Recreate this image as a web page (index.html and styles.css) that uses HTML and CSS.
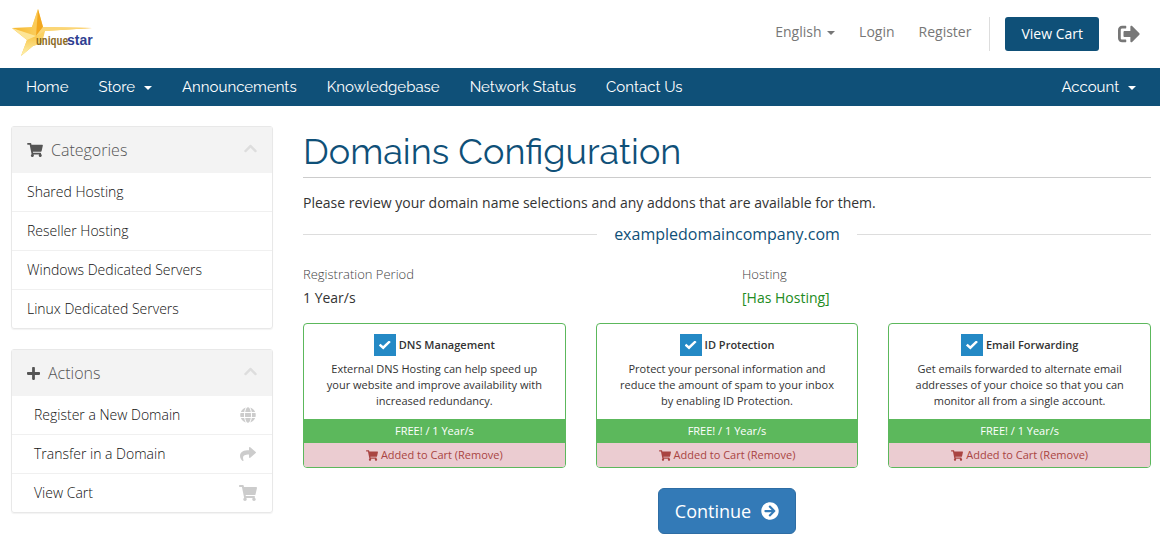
FILE: index.html
```html
<!DOCTYPE html>
<html lang="en">
<head>
<meta charset="utf-8">
<meta name="viewport" content="width=device-width, initial-scale=1">
<title>Domains Configuration</title>
<link rel="stylesheet" href="styles.css">
</head>
<body>
<svg class="sprite" aria-hidden="true">
  <symbol id="cart" viewBox="0 0 576 512"><path d="M528.12 301.319l47.273-208C578.806 78.301 567.391 64 551.99 64H159.208l-9.166-44.81C147.758 8.021 137.93 0 126.529 0H24C10.745 0 0 10.745 0 24v16c0 13.255 10.745 24 24 24h69.883l70.248 343.435C147.325 417.1 136 435.222 136 456c0 30.928 25.072 56 56 56s56-25.072 56-56c0-15.674-6.447-29.835-16.824-40h209.647C430.447 426.165 424 440.326 424 456c0 30.928 25.072 56 56 56s56-25.072 56-56c0-22.172-12.888-41.332-31.579-50.405l5.517-24.276c3.413-15.018-8.002-29.319-23.403-29.319H218.117l-6.545-32h293.145c11.206 0 20.92-7.754 23.403-18.681z"/></symbol>
  <symbol id="plus" viewBox="0 0 448 512"><path d="M416 208H272V64c0-17.67-14.33-32-32-32h-32c-17.67 0-32 14.33-32 32v144H32c-17.67 0-32 14.33-32 32v32c0 17.67 14.33 32 32 32h144v144c0 17.67 14.33 32 32 32h32c17.67 0 32-14.33 32-32V304h144c17.67 0 32-14.33 32-32v-32c0-17.67-14.33-32-32-32z"/></symbol>
  <symbol id="chevron" viewBox="0 0 448 512"><path d="M240.971 130.524l194.343 194.343c9.373 9.373 9.373 24.569 0 33.941l-22.667 22.667c-9.357 9.357-24.522 9.375-33.901.04L224 227.495 69.255 381.516c-9.379 9.335-24.544 9.317-33.901-.04l-22.667-22.667c-9.373-9.373-9.373-24.569 0-33.941L207.03 130.525c9.372-9.373 24.568-9.373 33.941-.001z"/></symbol>
  <symbol id="globe" viewBox="0 0 496 512"><path d="M336.5 160C322 70.7 287.8 8 248 8s-74 62.7-88.5 152h177zM152 256c0 22.2 1.2 43.5 3.3 64h185.3c2.1-20.5 3.3-41.8 3.3-64s-1.2-43.5-3.3-64H155.3c-2.1 20.5-3.3 41.8-3.3 64zm324.7-96c-28.6-67.9-86.5-120.4-158-141.6 24.4 33.8 41.2 84.7 50 141.6h108zM177.2 18.4C105.8 39.6 47.8 92.1 19.3 160h108c8.7-56.9 25.5-107.8 49.9-141.6zM487.4 192H372.7c2.1 21 3.3 42.5 3.3 64s-1.2 43-3.3 64h114.6c5.5-20.5 8.6-41.8 8.6-64s-3.1-43.5-8.5-64zM120 256c0-21.5 1.2-43 3.3-64H8.6C3.2 212.5 0 233.8 0 256s3.2 43.5 8.6 64h114.6c-2-21-3.2-42.5-3.2-64zm39.5 96c14.5 89.3 48.7 152 88.5 152s74-62.7 88.5-152h-177zm159.3 141.6c71.4-21.2 129.4-73.7 158-141.6h-108c-8.8 56.9-25.6 107.8-50 141.6zM19.3 352c28.6 67.9 86.5 120.4 158 141.6-24.4-33.8-41.2-84.7-50-141.6h-108z"/></symbol>
  <symbol id="share" viewBox="0 0 512 512"><path d="M503.691 189.836L327.687 37.851C312.281 24.546 288 35.347 288 56.015v80.053C127.371 137.907 0 170.1 0 322.326c0 61.441 39.581 122.309 83.333 154.132 13.653 9.931 33.111-2.533 28.077-18.631C66.066 312.814 132.917 274.316 288 272.085V360c0 20.7 24.3 31.453 39.687 18.164l176.004-152c11.071-9.562 11.086-26.753 0-36.328z"/></symbol>
  <symbol id="signout" viewBox="0 0 512 512"><path d="M497 273L329 441c-15 15-41 4.5-41-17v-96H152c-13.3 0-24-10.7-24-24v-96c0-13.3 10.7-24 24-24h136V88c0-21.4 25.9-32 41-17l168 168c9.3 9.4 9.3 24.6 0 34zM192 436v-40c0-6.6-5.4-12-12-12H96c-17.7 0-32-14.3-32-32V160c0-17.7 14.3-32 32-32h84c6.6 0 12-5.4 12-12V76c0-6.6-5.4-12-12-12H96c-53 0-96 43-96 96v192c0 53 43 96 96 96h84c6.6 0 12-5.4 12-12z"/></symbol>
  <symbol id="arrow" viewBox="0 0 512 512"><path d="M256 8c137 0 248 111 248 248S393 504 256 504 8 393 8 256 119 8 256 8zm-28.9 143.6l75.5 72.4H120c-13.3 0-24 10.7-24 24v16c0 13.3 10.7 24 24 24h182.6l-75.5 72.4c-9.7 9.3-9.9 24.8-.4 34.3l11 10.9c9.4 9.4 24.6 9.4 33.9 0L404.3 273c9.4-9.4 9.4-24.6 0-33.9L271.6 106.3c-9.4-9.4-24.6-9.4-33.9 0l-11 10.9c-9.5 9.6-9.3 25.1.4 34.4z"/></symbol>
</svg>

<header class="header">
  <a class="logo" href="#" aria-label="uniquestar">
    <svg width="84" height="52" viewBox="0 0 84 52">
      <defs>
        <linearGradient id="gold" x1="0" y1="0" x2="1" y2="0"><stop offset="0" stop-color="#f5b52c"/><stop offset="0.35" stop-color="#fbd264"/><stop offset="1" stop-color="#f8b430"/></linearGradient>
        <linearGradient id="pale" x1="0" y1="0" x2="0" y2="1"><stop offset="0" stop-color="#f9c64a"/><stop offset="1" stop-color="#fdf3b4"/></linearGradient>
      </defs>
      <path fill="url(#gold)" d="M27 1 32 19 81 20 34 23 31 35 22 38 10 48 16 32 1 20 21 19Z"/>
      <path fill="url(#pale)" d="M25 28 16 32 10 48 22 38 31 35Z"/>
      <path fill="#fbcb58" d="M27 1 21 19 25 28Z"/>
      <path fill="#f2a71f" d="M27 1 32 19 25 28Z"/>
      <path fill="#fde596" d="M1 20 25 28 16 32Z"/>
      <path fill="#fbd675" d="M32 19 81 20 34 23 25 28Z"/>
      <text class="logo-unique" x="25" y="37">unique</text>
      <text class="logo-star" x="56" y="37">star</text>
    </svg>
  </a>
  <div class="top-nav">
    <a href="#">English <span class="caret"></span></a>
    <a href="#">Login</a>
    <a href="#">Register</a>
    <div class="top-actions">
      <a class="cart-button" href="#">View Cart</a>
      <a class="signout" href="#" aria-label="Return"><svg class="icon-lg"><use href="#signout"/></svg></a>
    </div>
  </div>
</header>

<nav class="main-nav">
  <a href="#">Home</a>
  <a href="#">Store <span class="caret"></span></a>
  <a href="#">Announcements</a>
  <a href="#">Knowledgebase</a>
  <a href="#">Network Status</a>
  <a href="#">Contact Us</a>
  <a class="account" href="#">Account <span class="caret"></span></a>
</nav>

<div class="page">
  <aside class="sidebar">
    <section class="panel">
      <h2 class="panel-title"><svg class="icon"><use href="#cart"/></svg>Categories<svg class="chevron"><use href="#chevron"/></svg></h2>
      <a class="item" href="#">Shared Hosting</a>
      <a class="item" href="#">Reseller Hosting</a>
      <a class="item" href="#">Windows Dedicated Servers</a>
      <a class="item" href="#">Linux Dedicated Servers</a>
    </section>
    <section class="panel">
      <h2 class="panel-title"><svg class="icon icon-plus"><use href="#plus"/></svg>Actions<svg class="chevron"><use href="#chevron"/></svg></h2>
      <a class="item action" href="#">Register a New Domain<svg class="icon-action"><use href="#globe"/></svg></a>
      <a class="item action" href="#">Transfer in a Domain<svg class="icon-action"><use href="#share"/></svg></a>
      <a class="item action" href="#">View Cart<svg class="icon-action"><use href="#cart"/></svg></a>
    </section>
  </aside>

  <main>
    <h1>Domains Configuration</h1>
    <p class="intro">Please review your domain name selections and any addons that are available for them.</p>
    <h2 class="domain">exampledomaincompany.com</h2>
    <dl class="details">
      <div><dt>Registration Period</dt><dd>1 Year/s</dd></div>
      <div><dt>Hosting</dt><dd class="has-hosting">[Has Hosting]</dd></div>
    </dl>
    <form>
      <div class="addons">
        <section class="addon">
          <div class="addon-body">
            <label class="addon-name"><input type="checkbox" checked>DNS Management</label>
            <p>External DNS Hosting can help speed up your website and improve availability with increased redundancy.</p>
          </div>
          <div class="price">FREE! / 1 Year/s</div>
          <button class="remove" type="button"><svg class="icon-sm"><use href="#cart"/></svg>Added to Cart (Remove)</button>
        </section>
        <section class="addon">
          <div class="addon-body">
            <label class="addon-name"><input type="checkbox" checked>ID Protection</label>
            <p>Protect your personal information and reduce the amount of spam to your inbox by enabling ID Protection.</p>
          </div>
          <div class="price">FREE! / 1 Year/s</div>
          <button class="remove" type="button"><svg class="icon-sm"><use href="#cart"/></svg>Added to Cart (Remove)</button>
        </section>
        <section class="addon">
          <div class="addon-body">
            <label class="addon-name"><input type="checkbox" checked>Email Forwarding</label>
            <p>Get emails forwarded to alternate email addresses of your choice so that you can monitor all from a single account.</p>
          </div>
          <div class="price">FREE! / 1 Year/s</div>
          <button class="remove" type="button"><svg class="icon-sm"><use href="#cart"/></svg>Added to Cart (Remove)</button>
        </section>
      </div>
      <button class="continue" type="submit">Continue<svg class="icon-continue"><use href="#arrow"/></svg></button>
    </form>
  </main>
</div>
</body>
</html>
```
FILE: styles.css
```css
* { box-sizing: border-box; }
body {
  margin: 0;
  background: #fff;
  color: #333;
  font-family: "Open Sans", sans-serif;
  font-size: 14px;
  line-height: 20px;
}
a { color: inherit; text-decoration: none; }
h1, h2, p, dl, dd { margin: 0; }
svg { fill: currentColor; flex: none; }
button { font: inherit; cursor: pointer; }
.sprite { display: none; }

.caret {
  display: inline-block;
  margin-left: 2px;
  vertical-align: middle;
  border: 4px solid transparent;
  border-top-color: currentColor;
  border-bottom: 0;
}

.header {
  display: flex;
  justify-content: space-between;
  align-items: center;
  height: 68px;
  padding: 0 20px 0 11px;
}
.logo svg { display: block; }
.logo-unique {
  fill: #8a6a1e;
  font: 500 12px "Roboto Condensed", Roboto, sans-serif;
}
.logo-star {
  fill: #2f3f92;
  font: bold 14px "Liberation Sans", sans-serif;
}
.top-nav { display: flex; align-items: center; gap: 24px; color: #777; }
.top-nav > a { padding-bottom: 4px; }
.top-actions {
  display: flex;
  align-items: center;
  gap: 19px;
  margin-left: -6px;
  padding-left: 15px;
  border-left: 1px solid #ddd;
}
.cart-button {
  padding: 7px 16px;
  border-radius: 3px;
  background: #0f5078;
  color: #fff;
}
.signout { display: flex; }
.icon-lg { width: 22px; height: 22px; }

.main-nav {
  display: flex;
  align-items: center;
  gap: 30px;
  height: 38px;
  padding: 0 24px 0 26px;
  background: #0f5078;
  color: #fff;
  font-family: Raleway, Lato, sans-serif;
  font-size: 15px;
}
.main-nav .caret { margin-left: 5px; }
.account { margin-left: auto; }

.page {
  display: grid;
  grid-template-columns: minmax(0, 262fr) minmax(0, 848fr);
  gap: 30px;
  align-items: start;
  padding: 20px 9px 20px 11px;
}
.sidebar { display: grid; gap: 20px; }
.panel {
  border: 1px solid #e8e8e8;
  border-radius: 3px;
  box-shadow: 0 1px 1px rgba(0, 0, 0, 0.05);
  color: #555;
}
.panel-title {
  display: flex;
  align-items: center;
  gap: 8px;
  height: 46px;
  padding: 0 15px;
  background: #f3f3f3;
  font-size: 16px;
  font-weight: 300;
}
.icon { width: 16px; height: 14px; }
.icon-plus { width: 13px; height: 15px; }
.chevron { width: 13px; height: 15px; margin: 0 0 4px auto; color: #ddd; }
.item {
  display: flex;
  align-items: center;
  justify-content: space-between;
  height: 39px;
  padding: 0 15px;
  border-bottom: 1px solid #f0f0f0;
  color: #111;
  font-weight: 300;
}
.item:last-child { height: 38px; border-bottom: 0; }
.action { padding-left: 22px; }
.icon-action { width: 18px; height: 16px; color: #ccc; }

h1 {
  padding: 6px 0;
  border-bottom: 1px solid #ccc;
  color: #0f5078;
  font-family: Raleway, Lato, sans-serif;
  font-size: 36px;
  font-weight: 400;
  line-height: 39px;
}
.intro { margin-top: 15px; }
.domain {
  display: flex;
  align-items: center;
  gap: 17px;
  margin-top: 11px;
  color: #0f5078;
  font-size: 16px;
  font-weight: 400;
}
.domain::before, .domain::after {
  content: "";
  flex: 1;
  height: 1px;
  background: #ddd;
}
.details {
  display: grid;
  grid-template-columns: 1fr 1fr;
  gap: 30px;
  margin: 20px 0 15px;
}
dt { margin-bottom: 4px; color: #444; font-size: 13px; font-weight: 300; }
.has-hosting { color: #228b22; }

.addons { display: grid; grid-template-columns: repeat(3, minmax(0, 1fr)); gap: 30px; }
.addon {
  display: flex;
  flex-direction: column;
  overflow: hidden;
  border: 1px solid #5cb85c;
  border-radius: 4px;
  font-size: 11px;
  line-height: 16px;
  text-align: center;
}
.addon-body { flex: 1; padding: 10px 18px; }
.addon-name {
  display: flex;
  align-items: center;
  justify-content: center;
  gap: 3px;
  margin-bottom: 5px;
  font-weight: 600;
}
.addon-name input {
  appearance: none;
  display: grid;
  place-items: center;
  width: 22px;
  height: 22px;
  margin: 0;
  background: #2489c5;
}
.addon-name input:checked::before {
  content: "";
  width: 12px;
  height: 9px;
  background: #fff;
  clip-path: polygon(0 55%, 14% 36%, 36% 62%, 85% 0, 100% 18%, 37% 100%);
}
.price { padding: 4px; background: #5cb85c; color: #fff; }
.remove {
  display: flex;
  align-items: center;
  justify-content: center;
  gap: 3px;
  padding: 4px;
  border: 0;
  background: #ebccd1;
  color: #a94442;
}
.icon-sm { width: 12px; height: 11px; }

.continue {
  display: flex;
  align-items: center;
  gap: 10px;
  margin: 20px auto 0;
  padding: 10px 16px;
  border: 1px solid #2e6da4;
  border-radius: 6px;
  background: #337ab7;
  color: #fff;
  font-size: 18px;
  line-height: 24px;
}
.icon-continue { width: 18px; height: 18px; }
```
